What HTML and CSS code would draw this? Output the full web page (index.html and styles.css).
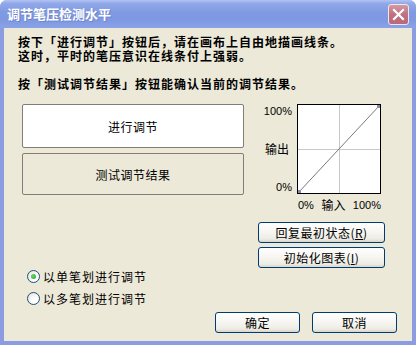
FILE: index.html
```html
<!DOCTYPE html>
<html lang="zh">
<head>
<meta charset="utf-8">
<link rel="stylesheet" href="styles.css">
</head>
<body>
<div class="window">
  <div class="titlebar">
    <span class="title">调节笔压检测水平</span>
    <span class="close"><svg width="13" height="13" viewBox="0 0 13 13"><path d="M2 2 L11 11 M11 2 L2 11" stroke="#fff" stroke-width="2.2" stroke-linecap="square"/></svg></span>
  </div>
  <div class="client">
    <div class="intro">
      <p>按下「进行调节」按钮后，请在画布上自由地描画线条。<br>这时，平时的笔压意识在线条付上强弱。</p>
      <p>按「测试调节结果」按钮能确认当前的调节结果。</p>
    </div>
    <div class="main">
      <div class="left">
        <div class="bigbtn white">进行调节</div>
        <div class="bigbtn">测试调节结果</div>
      </div>
      <div class="right">
        <div class="graph">
          <div class="ylabels"><span>100%</span><span class="cjk">输出</span><span>0%</span></div>
          <div class="plot">
            <svg width="84" height="90" viewBox="0 0 84 90">
              <rect x="0.5" y="0.5" width="83" height="89" fill="#fff" stroke="#000"/>
              <line x1="42.5" y1="1" x2="42.5" y2="89" stroke="#c8c8c8"/>
              <line x1="1" y1="45.5" x2="83" y2="45.5" stroke="#c8c8c8"/>
              <line x1="1" y1="89" x2="83" y2="1" stroke="#6a6a6a" stroke-width="0.9"/>
              <rect x="1" y="86" width="3" height="3" fill="#8a88b0"/>
              <rect x="80" y="1" width="3" height="3" fill="#8a88b0"/>
            </svg>
          </div>
          <div class="xlabels"><span>0%</span><span class="cjk">输入</span><span>100%</span></div>
        </div>
        <button class="xpbtn wide">回复最初状态(<u>R</u>)</button>
        <button class="xpbtn wide">初始化图表(<u>I</u>)</button>
      </div>
    </div>
    <div class="radios">
      <label class="radio"><span class="dot checked"></span>以单笔划进行调节</label>
      <label class="radio"><span class="dot"></span>以多笔划进行调节</label>
    </div>
    <div class="footer">
      <button class="xpbtn">确定</button>
      <button class="xpbtn">取消</button>
    </div>
  </div>
</div>
</body>
</html>
```

FILE: styles.css
```css
html, body {
  margin: 0;
  padding: 0;
}
body {
  width: 416px;
  height: 345px;
  overflow: hidden;
  background: #fff;
  font-family: "Noto Sans CJK SC", "Liberation Sans", sans-serif;
  font-size: 12px;
  color: #000;
}
.window {
  width: 416px;
  height: 345px;
  box-sizing: border-box;
  display: flex;
  flex-direction: column;
  background: #8b9ce0;
  border-radius: 7px 7px 0 0;
  overflow: hidden;
}
.titlebar {
  height: 28px;
  flex: none;
  display: flex;
  align-items: center;
  justify-content: space-between;
  padding: 0 7px 0 7px;
  background: linear-gradient(#b3c4f2 0%, #91a9ea 12%, #7f99e2 45%, #7e98e2 70%, #8aa3e7 100%);
}
.title {
  color: #fff;
  font-weight: bold;
  font-size: 13px;
  line-height: 16px;
  text-shadow: 1px 1px 0 #6d86cc;
}
.close {
  width: 19px;
  height: 19px;
  border: 1px solid #f1e6ea;
  border-radius: 3px;
  background: linear-gradient(#d49aa5, #c0707f 50%, #b86a7c);
  display: flex;
  align-items: center;
  justify-content: center;
}
.client {
  flex: 1;
  margin: 0 4px 4px 4px;
  background: #ece9d8;
  padding: 8px 0 0 14px;
  display: flex;
  flex-direction: column;
}
.intro p {
  margin: 0 0 14px 0;
  font-family: "Liberation Sans", "Noto Sans CJK SC", sans-serif;
  font-weight: bold;
  font-size: 12px;
  line-height: 14px;
  letter-spacing: 1px;
  white-space: nowrap;
}
.intro p:last-child {
  margin-bottom: 0;
}
.main {
  margin: 12px 0 0 4px;
  display: flex;
  gap: 14px;
}
.left {
  width: 222px;
  display: flex;
  flex-direction: column;
  gap: 5px;
}
.bigbtn {
  height: 42px;
  box-sizing: border-box;
  border: 1px solid #7f7f78;
  border-radius: 2px;
  display: flex;
  align-items: center;
  justify-content: center;
  font-size: 12px;
  letter-spacing: 0.5px;
  background: #ece9d8;
}
.bigbtn.white {
  height: 44px;
  background: #fff;
}
.right {
  width: 127px;
  display: flex;
  flex-direction: column;
  gap: 4px;
}
.graph {
  display: grid;
  grid-template-columns: 34px 84px;
  column-gap: 5px;
  row-gap: 5px;
  margin-bottom: 7px;
}
.ylabels {
  display: flex;
  flex-direction: column;
  justify-content: space-between;
  align-items: flex-end;
  padding: 1px 0 1px 0;
  font-family: "Liberation Sans", sans-serif;
  font-size: 11px;
  line-height: 12px;
}
.cjk {
  font-family: "Noto Sans CJK SC", sans-serif;
  font-size: 12px;
}
.ylabels .cjk {
  align-self: flex-start;
  padding-left: 7px;
}
.plot {
  height: 90px;
}
.plot svg {
  display: block;
}
.xlabels {
  grid-column: 2;
  display: flex;
  justify-content: space-between;
  font-family: "Liberation Sans", sans-serif;
  font-size: 11px;
  line-height: 12px;
  padding-left: 1px;
}
.xpbtn {
  font-family: "Noto Sans CJK SC", "Liberation Sans", sans-serif;
  font-size: 12px;
  color: #000;
  height: 21px;
  padding: 0;
  border: 1px solid #003c74;
  border-radius: 3px;
  background: linear-gradient(#ffffff 0%, #f6f5f0 50%, #ecebe4 85%, #d8d4c8 100%);
  display: flex;
  align-items: center;
  justify-content: center;
  line-height: 14px;
  letter-spacing: 0.5px;
}
.xpbtn u {
  text-underline-offset: 1px;
}
.wide {
  width: 127px;
}
.radios {
  margin: -3px 0 0 9px;
  display: flex;
  flex-direction: column;
}
.radio {
  height: 22px;
  display: flex;
  align-items: center;
  gap: 3px;
  font-size: 12px;
  letter-spacing: 1px;
}
.dot {
  width: 11px;
  height: 11px;
  border: 1px solid #1c5180;
  border-radius: 50%;
  background: radial-gradient(circle at 65% 65%, #ffffff 30%, #dcdad0 100%);
  display: flex;
  align-items: center;
  justify-content: center;
}
.dot.checked::after {
  content: "";
  width: 5px;
  height: 5px;
  border-radius: 50%;
  background: radial-gradient(circle at 40% 40%, #6ed66e, #21a121);
}
.footer {
  margin-top: auto;
  padding: 0 15px 8px 0;
  display: flex;
  justify-content: flex-end;
  gap: 12px;
}
.footer .xpbtn {
  width: 85px;
}
```
